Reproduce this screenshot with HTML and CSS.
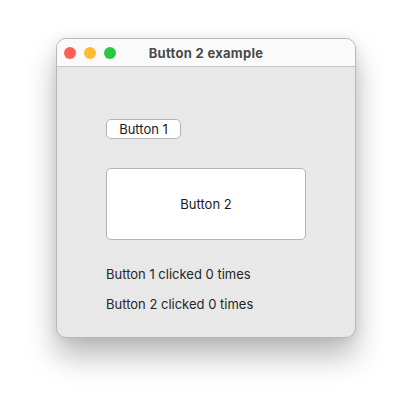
FILE: index.html
```html
<!DOCTYPE html>
<html>
<head>
<meta charset="utf-8">
<link rel="stylesheet" href="styles.css">
</head>
<body>
<div class="window">
  <div class="titlebar">
    <div class="lights">
      <span class="light red"></span>
      <span class="light yellow"></span>
      <span class="light green"></span>
    </div>
    <div class="title">Button 2 example</div>
  </div>
  <div class="content">
    <button class="btn small">Button 1</button>
    <button class="btn big">Button 2</button>
    <div class="label first">Button 1 clicked 0 times</div>
    <div class="label">Button 2 clicked 0 times</div>
  </div>
</div>
</body>
</html>
```
FILE: styles.css
```css
html, body {
  margin: 0;
  padding: 0;
  background: #ffffff;
  width: 412px;
  height: 412px;
  overflow: hidden;
  font-family: "Inter", "Liberation Sans", sans-serif;
}
body {
  padding-top: 38px;
  padding-left: 56px;
  box-sizing: border-box;
}
.window {
  width: 300px;
  height: 300px;
  box-sizing: border-box;
  border-radius: 10px;
  background: #e8e8e8;
  border: 1px solid #b8b8b8;
  box-shadow: 0 18px 30px rgba(0,0,0,0.28), 0 0 12px rgba(0,0,0,0.08);
  overflow: hidden;
  display: flex;
  flex-direction: column;
}
.titlebar {
  height: 28px;
  flex: none;
  box-sizing: border-box;
  background: #fafafa;
  border-bottom: 1px solid #c6c6c6;
  display: flex;
  align-items: center;
  position: relative;
}
.lights {
  display: flex;
  gap: 8px;
  padding-left: 7px;
}
.light {
  width: 12px;
  height: 12px;
  border-radius: 50%;
  display: block;
}
.red { background: #fe5f57; }
.yellow { background: #febc2e; }
.green { background: #28c840; }
.title {
  position: absolute;
  left: 0;
  right: 0;
  top: 0;
  bottom: 0;
  display: flex;
  align-items: center;
  justify-content: center;
  font-size: 13px;
  font-weight: 700;
  letter-spacing: 0.3px;
  color: #4a4a4a;
}
.content {
  padding-left: 49px;
  padding-top: 52px;
  display: flex;
  flex-direction: column;
  align-items: flex-start;
}
.btn {
  font-family: "Inter", "Liberation Sans", sans-serif;
  font-size: 13px;
  color: #1a1a1a;
  background: #ffffff;
  border: 1px solid #b4b4b4;
  border-radius: 5px;
  padding: 0;
  margin: 0;
}
.small {
  width: 75px;
  height: 20px;
}
.big {
  width: 200px;
  height: 72px;
  margin-top: 29px;
}
.label {
  font-size: 13px;
  color: #262626;
  line-height: 16px;
  height: 16px;
}
.first {
  margin-top: 26px;
}
.label + .label {
  margin-top: 14px;
}
```
